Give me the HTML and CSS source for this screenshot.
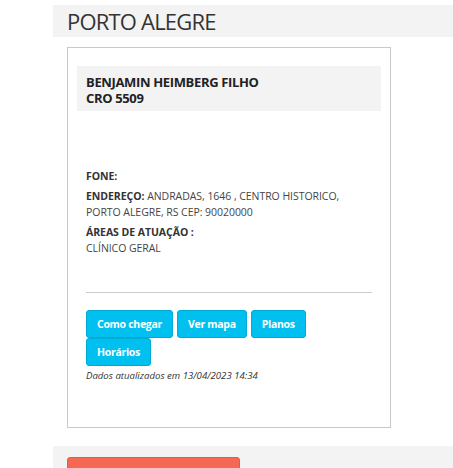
FILE: index.html
```html
<!DOCTYPE html>
<html lang="pt-BR">
<head>
<meta charset="utf-8">
<title>Porto Alegre</title>
<link rel="stylesheet" href="styles.css">
</head>
<body>
<div class="page">
  <div class="header"><h1 class="title">PORTO ALEGRE</h1></div>
  <div class="content">
    <div class="card">
      <div class="name-box">
        <div class="name">BENJAMIN HEIMBERG FILHO</div>
        <div class="name">CRO 5509</div>
      </div>
      <div class="info">
        <p class="row"><b>FONE:</b></p>
        <p class="row"><b>ENDEREÇO:</b> ANDRADAS, 1646 , CENTRO HISTORICO, PORTO ALEGRE, RS CEP: 90020000</p>
        <p class="row tight"><b>ÁREAS DE ATUAÇÃO :</b><br>CLÍNICO GERAL</p>
        <hr class="rule">
        <div class="buttons">
          <a class="btn">Como chegar</a>
          <a class="btn">Ver mapa</a>
          <a class="btn">Planos</a>
          <a class="btn">Horários</a>
        </div>
        <p class="updated">Dados atualizados em 13/04/2023 14:34</p>
      </div>
    </div>
  </div>
  <div class="footer">
    <div class="btn-red"></div>
  </div>
</div>
</body>
</html>
```
FILE: styles.css
```css
html, body {
  margin: 0;
  padding: 0;
  background: #fff;
}
body {
  font-family: "Open Sans", "Noto Sans", sans-serif;
  color: #333;
  overflow: hidden;
}
.page {
  margin: 5px 0 0 53px;
}
.header {
  background: #f3f3f3;
  height: 32px;
  padding-left: 14px;
  display: flex;
  align-items: center;
}
.title {
  margin: 0;
  font-size: 22px;
  letter-spacing: -0.8px;
  font-weight: 400;
  color: #333;
  line-height: 32px;
}
.content {
  padding: 10px 0 18px 14px;
}
.card {
  border: 1px solid #c9c9c9;
  padding: 18px 9px 44px 9px;
  box-sizing: border-box;
  width: 324px;
}
.name-box {
  background: #f3f3f3;
  padding: 8px 9px 5px;
}
.name {
  font-size: 13px;
  letter-spacing: -0.35px;
  font-weight: 700;
  line-height: 16px;
  color: #222;
}
.info {
  padding: 57px 9px 0;
}
.row {
  margin: 0 0 3px;
  font-size: 10.5px;
  letter-spacing: -0.05px;
  line-height: 16.5px;
  color: #444;
}
.row b {
  color: #333;
}
.row.tight {
  line-height: 16px;
}
.rule {
  border: 0;
  border-top: 1px solid #ccc;
  margin: 36px 0 17px;
}
.buttons {
  display: flex;
  flex-wrap: wrap;
  column-gap: 4px;
}
.btn {
  display: inline-block;
  background: #00c0ef;
  border: 1px solid #00acd6;
  border-radius: 3px;
  color: #fff;
  font-size: 10.5px;
  letter-spacing: -0.3px;
  font-weight: 700;
  height: 28px;
  line-height: 26px;
  padding: 0 10px;
  box-sizing: border-box;
}
.updated {
  margin: 3px 0 0;
  font-size: 9.6px;
  font-style: italic;
  color: #333;
  line-height: 14px;
}
.footer {
  background: #f3f3f3;
  padding: 11px 14px 0;
  height: 40px;
}
.btn-red {
  width: 173px;
  height: 34px;
  background: #f56954;
  border: 1px solid #f4543c;
  border-radius: 3px;
  box-sizing: border-box;
}
```
